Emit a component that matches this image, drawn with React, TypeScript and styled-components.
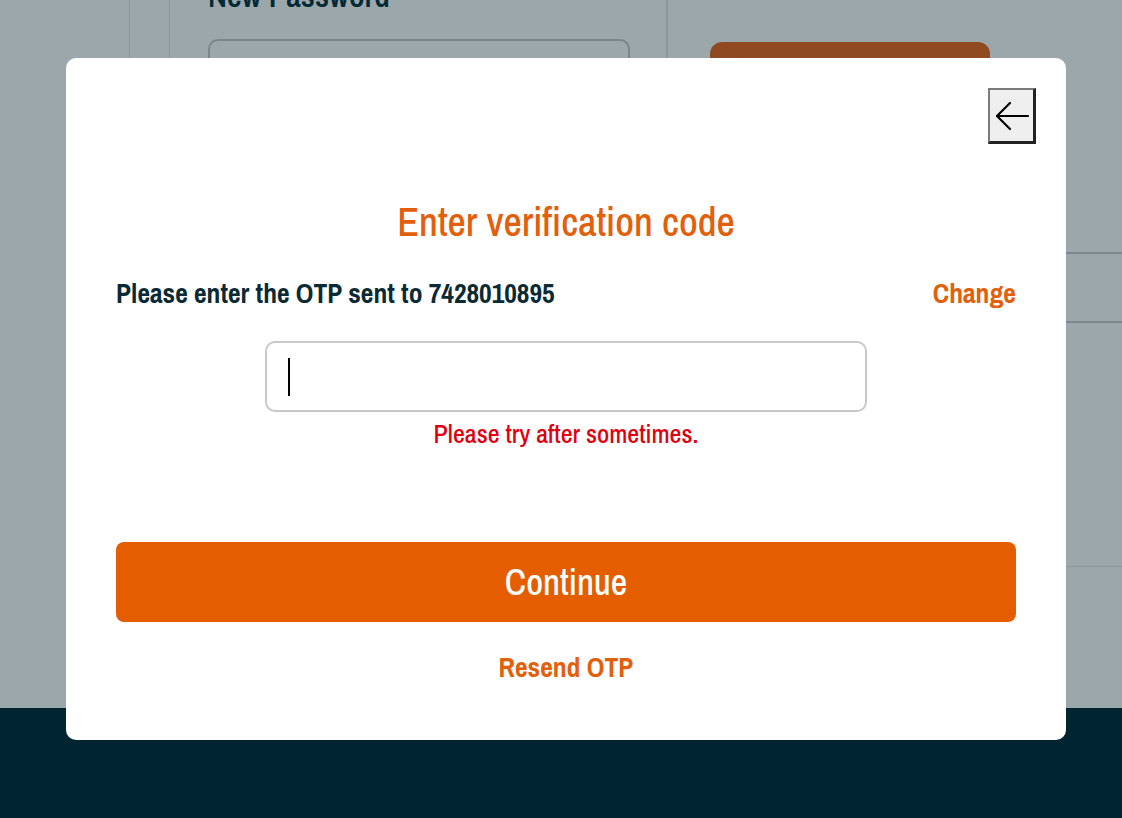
import styled, { createGlobalStyle } from 'styled-components';

const GlobalStyle = createGlobalStyle`
    html, body {
        margin: 0;
        padding: 0;
        width: 1122px;
        height: 818px;
        overflow: hidden;
        background: #9ca7ac;
    }
    * {
        box-sizing: border-box;
    }
`;

const fontStack = `"Liberation Sans Narrow", "Archivo Narrow", "DejaVu Sans Condensed", "Liberation Sans", sans-serif`;

const Page = styled.div`
    width: 1122px;
    height: 818px;
    display: flex;
    flex-direction: column;
    font-family: ${fontStack};
`;

const PageBody = styled.div`
    height: 708px;
    display: flex;
    overflow: hidden;
    background: #9ca7ac;
`;

const Gutter = styled.div<{width: number}>`
    width: ${props => props.width}px;
    flex-shrink: 0;
    border-right: 1px solid #8b979c;
`;

const FormColumn = styled.div`
    width: 498px;
    flex-shrink: 0;
    border-right: 2px solid #8b979c;
    padding: 0 36px 0 38px;
    margin-top: -22px;
`;

const FieldLabel = styled.div`
    font-size: 32px;
    line-height: 36px;
    font-weight: 600;
    color: #022a36;
`;

const GhostInput = styled.div`
    margin-top: 25px;
    height: 56px;
    border: 2px solid #7a868b;
    border-radius: 10px;
`;

const SideColumn = styled.div`
    flex: 1;
    display: flex;
    flex-direction: column;
`;

const SideButton = styled.div`
    margin: 42px 0 0 42px;
    width: 280px;
    height: 56px;
    background: #8f4a22;
    border-radius: 12px;
`;

const SideRow = styled.div<{height: number, thick: boolean}>`
    height: ${props => props.height}px;
    border-bottom: ${props => props.thick ? '2px solid #7c888d' : '1px solid #8b979c'};
`;

const Footer = styled.div`
    flex: 1;
    background: #012530;
`;

const Modal = styled.div`
    position: absolute;
    left: 66px;
    top: 58px;
    width: 1000px;
    height: 682px;
    background: #ffffff;
    border-radius: 10px;
    padding: 30px 50px 0;
    display: flex;
    flex-direction: column;
    font-family: ${fontStack};
`;

const TopBar = styled.div`
    display: flex;
    justify-content: flex-end;
    margin-right: -20px;
`;

const BackButton = styled.button`
    width: 48px;
    height: 56px;
    padding: 0;
    display: flex;
    align-items: center;
    justify-content: center;
    background: #efefef;
    border-style: solid;
    border-width: 2px 3px 3px 2px;
    border-color: #7a7a7a #222222 #222222 #7a7a7a;
`;

const Title = styled.h2`
    margin: 56px 0 0;
    text-align: center;
    font-size: 40px;
    line-height: 44px;
    font-weight: 500;
    color: #e2600c;
`;

const InfoRow = styled.div`
    margin-top: 34px;
    display: flex;
    justify-content: space-between;
    align-items: center;
    line-height: 30px;
`;

const InfoText = styled.span`
    font-size: 27.6px;
    font-weight: 700;
    color: #0b2a33;
`;

const LinkText = styled.span`
    font-size: 27.7px;
    font-weight: 700;
    color: #e2600c;
    cursor: pointer;
`;

const OtpBox = styled.div`
    margin: 33px auto 0;
    width: 602px;
    height: 71px;
    border: 2px solid #c8c8c8;
    border-radius: 10px;
    display: flex;
    align-items: center;
    padding-left: 21px;
`;

const Caret = styled.span`
    width: 2px;
    height: 38px;
    background: #000;
`;

const ErrorText = styled.div`
    margin-top: 8px;
    text-align: center;
    font-size: 26px;
    line-height: 28px;
    font-weight: 500;
    color: #e0000f;
`;

const ContinueButton = styled.button`
    margin-top: 94px;
    height: 80px;
    width: 100%;
    border: none;
    border-radius: 8px;
    background: #e45d00;
    color: #ffffff;
    font-family: ${fontStack};
    font-size: 36px;
    font-weight: 500;
`;

const Resend = styled.div`
    margin-top: 30px;
    text-align: center;
    line-height: 30px;
`;

export default function App() {
    return (
        <>
            <GlobalStyle />
            <Page>
                <PageBody>
                    <Gutter width={130} />
                    <Gutter width={40} />
                    <FormColumn>
                        <FieldLabel>New Password</FieldLabel>
                        <GhostInput />
                    </FormColumn>
                    <SideColumn>
                        <SideButton />
                        <SideRow height={156} thick={true} />
                        <SideRow height={69} thick={true} />
                        <SideRow height={244} thick={false} />
                    </SideColumn>
                </PageBody>
                <Footer />
            </Page>
            <Modal>
                <TopBar>
                    <BackButton aria-label="Back">
                        <svg width="36" height="32" viewBox="0 0 36 32" fill="none" stroke="#000" strokeWidth="2.2" strokeLinecap="round" strokeLinejoin="round">
                            <path d="M3 16 H34" />
                            <path d="M16 3 L3 16 L16 29" />
                        </svg>
                    </BackButton>
                </TopBar>
                <Title>Enter verification code</Title>
                <InfoRow>
                    <InfoText>Please enter the OTP sent to 7428010895</InfoText>
                    <LinkText>Change</LinkText>
                </InfoRow>
                <OtpBox>
                    <Caret />
                </OtpBox>
                <ErrorText>Please try after sometimes.</ErrorText>
                <ContinueButton>Continue</ContinueButton>
                <Resend>
                    <LinkText>Resend OTP</LinkText>
                </Resend>
            </Modal>
        </>
    );
}
